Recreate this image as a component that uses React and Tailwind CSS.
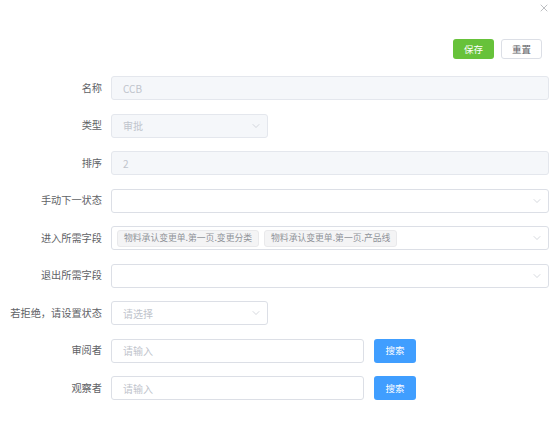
import { X, ChevronDown } from "lucide-react";

const FONT = { fontFamily: '"Noto Sans CJK SC", "Noto Sans", sans-serif' };

const Label = ({ children }) => (
  <div className="w-[111px] shrink-0 pr-[9px] text-right text-[10.2px] text-[#606266] leading-none">
    {children}
  </div>
);

const Row = ({ label, children }) => (
  <div className="flex items-center h-[24px]">
    <Label>{label}</Label>
    {children}
  </div>
);

const Chevron = () => (
  <ChevronDown size={12} strokeWidth={1.3} className="text-[#c0c4cc] shrink-0" />
);

const SelectBox = ({ className = "", disabled, text, placeholder, children }) => (
  <div
    className={`h-[24px] flex items-center rounded-[3px] border pl-[11px] pr-[5px] ${
      disabled ? "bg-[#f5f7fa] border-[#e4e7ed]" : "bg-white border-[#dcdfe6]"
    } ${className}`}
  >
    <div className="flex-1 flex items-center gap-[5px] text-[10px] text-[#c0c4cc] overflow-hidden">
      {children ?? (text || placeholder)}
    </div>
    <Chevron />
  </div>
);

const Tag = ({ children }) => (
  <span className="h-[17px] flex items-center px-[6px] rounded-[3px] bg-[#f4f4f5] border border-[#e9e9eb] text-[8.8px] text-[#909399] whitespace-nowrap">
    {children}
  </span>
);

const TextInput = ({ className = "", disabled, value, placeholder }) => (
  <div
    className={`h-[24px] flex items-center rounded-[3px] border px-[11px] text-[10px] text-[#c0c4cc] ${
      disabled ? "bg-[#f5f7fa] border-[#e4e7ed]" : "bg-white border-[#dcdfe6]"
    } ${className}`}
  >
    {value || placeholder}
  </div>
);

const SearchButton = () => (
  <button
    type="button"
    className="ml-[10px] h-[24px] w-[42px] rounded-[3px] bg-[#409eff] text-white text-[9.5px]"
  >
    搜索
  </button>
);

export default function App() {
  return (
    <div className="w-[554px] h-[423px] bg-white relative overflow-hidden" style={FONT}>
      <button type="button" className="absolute right-[4px] top-[2px] text-[#909399]">
        <X size={12} strokeWidth={1.2} />
      </button>

      <div className="pt-[39px] pr-[12px] flex justify-end gap-[7px]">
        <button
          type="button"
          className="h-[20px] w-[41px] rounded-[3px] bg-[#67c23a] text-white text-[9.5px]"
        >
          保存
        </button>
        <button
          type="button"
          className="h-[20px] w-[41px] rounded-[3px] bg-white border border-[#dcdfe6] text-[#606266] text-[9.5px]"
        >
          重置
        </button>
      </div>

      <div className="mt-[17px] pr-[5px] flex flex-col gap-[13.5px]">
        <Row label="名称">
          <TextInput className="flex-1" disabled value="CCB" />
        </Row>
        <Row label="类型">
          <SelectBox className="w-[157px]" disabled text="审批" />
        </Row>
        <Row label="排序">
          <TextInput className="flex-1" disabled value="2" />
        </Row>
        <Row label="手动下一状态">
          <SelectBox className="flex-1" />
        </Row>
        <Row label="进入所需字段">
          <SelectBox className="flex-1 !pl-[5px]">
            <Tag>物料承认变更单.第一页.变更分类</Tag>
            <Tag>物料承认变更单.第一页.产品线</Tag>
          </SelectBox>
        </Row>
        <Row label="退出所需字段">
          <SelectBox className="flex-1" />
        </Row>
        <Row label="若拒绝，请设置状态">
          <SelectBox className="w-[157px]" placeholder="请选择" />
        </Row>
        <Row label="审阅者">
          <TextInput className="w-[253px]" placeholder="请输入" />
          <SearchButton />
        </Row>
        <Row label="观察者">
          <TextInput className="w-[253px]" placeholder="请输入" />
          <SearchButton />
        </Row>
      </div>
    </div>
  );
}
